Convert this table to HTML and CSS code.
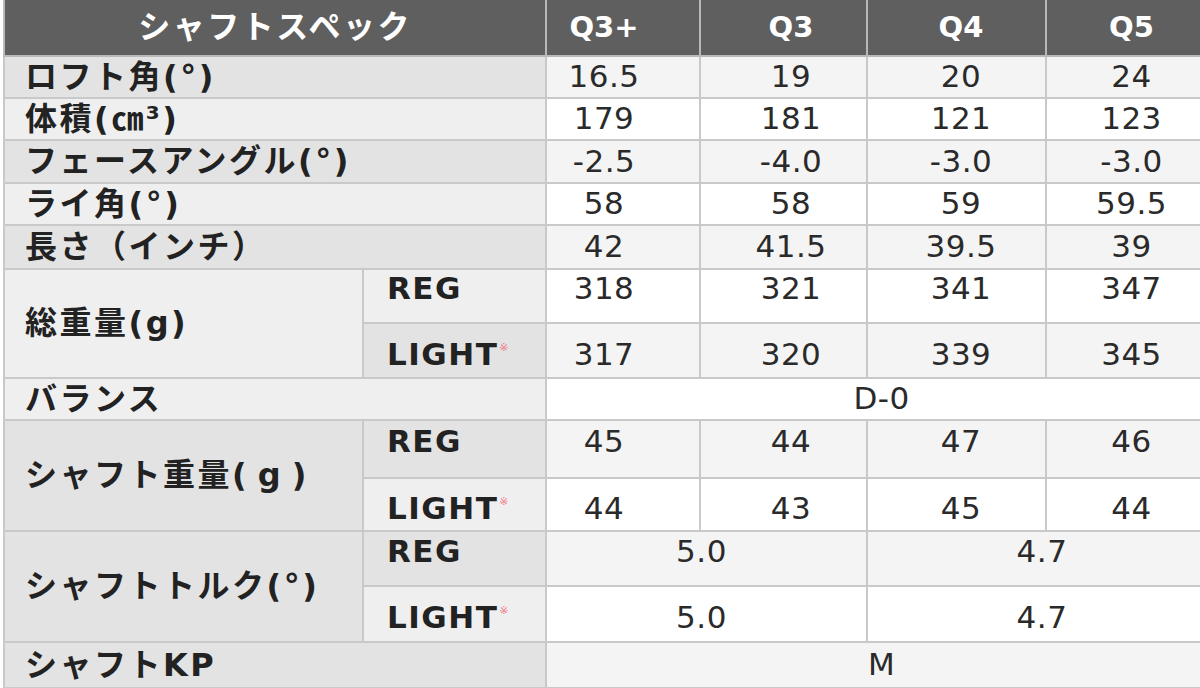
FILE: index.html
```html
<!DOCTYPE html>
<html lang="ja">
<head>
<meta charset="utf-8">
<title>シャフトスペック</title>
<link rel="stylesheet" href="styles.css">
</head>
<body>
<table class="spec">
  <colgroup>
    <col class="w-label">
    <col class="w-sub">
    <col class="w-q3p">
    <col class="w-q3">
    <col class="w-q4">
    <col class="w-q5">
  </colgroup>
  <thead>
    <tr class="h56">
      <th colspan="2" class="title">シャフトスペック</th>
      <th class="c1">Q3+</th>
      <th class="c2">Q3</th>
      <th class="c3">Q4</th>
      <th class="c4">Q5</th>
    </tr>
  </thead>
  <tbody>
    <tr class="h42">
      <th colspan="2" class="lab">ロフト角(°)</th>
      <td class="c1">16.5</td><td class="c2">19</td><td class="c3">20</td><td class="c4">24</td>
    </tr>
    <tr class="h42">
      <th colspan="2" class="lab">体積(㎝³)</th>
      <td class="c1">179</td><td class="c2">181</td><td class="c3">121</td><td class="c4">123</td>
    </tr>
    <tr class="h43">
      <th colspan="2" class="lab">フェースアングル(°)</th>
      <td class="c1">-2.5</td><td class="c2">-4.0</td><td class="c3">-3.0</td><td class="c4">-3.0</td>
    </tr>
    <tr class="h42">
      <th colspan="2" class="lab">ライ角(°)</th>
      <td class="c1">58</td><td class="c2">58</td><td class="c3">59</td><td class="c4">59.5</td>
    </tr>
    <tr class="h44">
      <th colspan="2" class="lab">長さ（インチ）</th>
      <td class="c1">42</td><td class="c2">41.5</td><td class="c3">39.5</td><td class="c4">39</td>
    </tr>
    <tr class="h54 reg">
      <th rowspan="2" class="lab">総重量(g)</th>
      <th class="sub">REG</th>
      <td class="c1">318</td><td class="c2">321</td><td class="c3">341</td><td class="c4">347</td>
    </tr>
    <tr class="h55 light">
      <th class="sub">LIGHT<sup class="note">※</sup></th>
      <td class="c1">317</td><td class="c2">320</td><td class="c3">339</td><td class="c4">345</td>
    </tr>
    <tr class="h42">
      <th colspan="2" class="lab">バランス</th>
      <td colspan="4" class="all">D-0</td>
    </tr>
    <tr class="h58 reg">
      <th rowspan="2" class="lab">シャフト重量<span class="par">( g )</span></th>
      <th class="sub">REG</th>
      <td class="c1">45</td><td class="c2">44</td><td class="c3">47</td><td class="c4">46</td>
    </tr>
    <tr class="h53 light">
      <th class="sub">LIGHT<sup class="note">※</sup></th>
      <td class="c1">44</td><td class="c2">43</td><td class="c3">45</td><td class="c4">44</td>
    </tr>
    <tr class="h55 reg">
      <th rowspan="2" class="lab">シャフトトルク(°)</th>
      <th class="sub">REG</th>
      <td colspan="2" class="pa">5.0</td><td colspan="2" class="pb">4.7</td>
    </tr>
    <tr class="h56 light">
      <th class="sub">LIGHT<sup class="note">※</sup></th>
      <td colspan="2" class="pa">5.0</td><td colspan="2" class="pb">4.7</td>
    </tr>
    <tr class="h46">
      <th colspan="2" class="lab">シャフトKP</th>
      <td colspan="4" class="all">M</td>
    </tr>
  </tbody>
</table>
</body>
</html>
```

FILE: styles.css
```css
html, body {
  margin: 0;
  padding: 0;
  background: #ffffff;
  overflow: hidden;
}

body {
  width: 1200px;
  height: 688px;
}

.spec {
  margin-left: 3px;
  width: 1213px;
  table-layout: fixed;
  border-collapse: collapse;
  font-family: "DejaVu Sans", "Noto Sans CJK JP", sans-serif;
  font-size: 30px;
  line-height: 1.2;
  color: #222222;
}

.w-label { width: 359px; }
.w-sub { width: 183px; }
.w-q3p { width: 154px; }
.w-q3 { width: 167px; }
.w-q4 { width: 179px; }
.w-q5 { width: 171px; }

.spec th,
.spec td {
  border: 2px solid #c9c9c9;
  padding: 0;
  vertical-align: middle;
}

.spec td {
  text-align: center;
  font-weight: normal;
  color: #2a2a2a;
  font-size: 31px;
  letter-spacing: 0.5px;
}

.spec thead th {
  background: #5f5f5f;
  color: #ffffff;
  font-weight: bold;
  text-align: center;
  border-color: #b9b9b9;
  border-top: 0;
  font-size: 29px;
}

.spec thead th.title {
  font-family: "DejaVu Sans", "Noto Sans CJK JP", sans-serif;
  font-size: 32px;
  letter-spacing: 2.5px;
}

.lab,
.sub {
  text-align: left;
  font-weight: bold;
  font-family: "DejaVu Sans", "Noto Sans CJK JP", sans-serif;
}

.lab {
  padding-left: 20px !important;
  font-size: 32px;
  letter-spacing: 2.5px;
}

.par {
  letter-spacing: 0;
}

.sub {
  padding-left: 23px !important;
  font-size: 31px;
  letter-spacing: 1.5px;
}

.note {
  color: #f07a86;
  font-size: 11px;
  font-weight: normal;
  letter-spacing: 0;
  vertical-align: 14px;
  margin-left: 1px;
}

/* stripes */
.spec tbody tr:nth-child(odd) th { background: #e3e3e3; }
.spec tbody tr:nth-child(even) th { background: #efefef; }
.spec tbody tr:nth-child(odd) td { background: #f4f4f4; }
.spec tbody tr:nth-child(even) td { background: #ffffff; }

/* column centring offsets */
.c1 { padding-right: 38px !important; }
.c2 { padding-left: 15px !important; }
.c3 { padding-left: 9px !important; }
.pa { padding-right: 10px !important; }

/* sub-row vertical placement */
.reg td, .reg .sub { padding-bottom: 14px !important; }
.light td, .light .sub { padding-top: 8px !important; }

.h56 { height: 56px; }
.h42 { height: 42px; }
.h43 { height: 43px; }
.h44 { height: 44px; }
.h46 { height: 46px; }
.h53 { height: 53px; }
.h54 { height: 54px; }
.h55 { height: 55px; }
.h58 { height: 58px; }
```
